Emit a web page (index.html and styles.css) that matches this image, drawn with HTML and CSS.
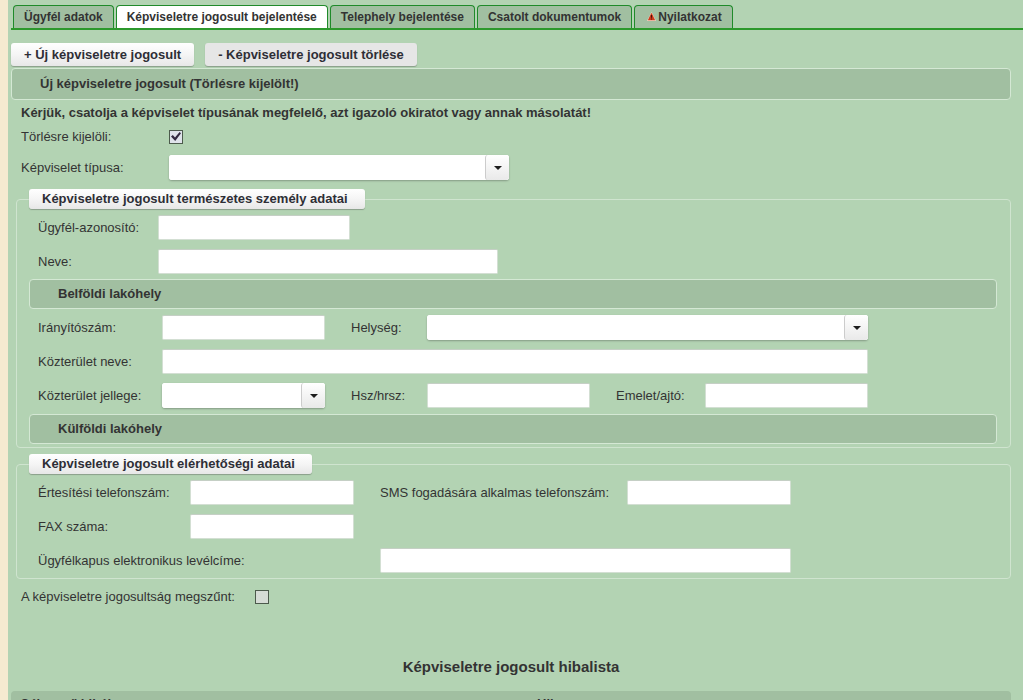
FILE: index.html
```html
<!DOCTYPE html>
<html lang="hu">
<head>
<meta charset="utf-8">
<title>Képviseletre jogosult bejelentése</title>
<link rel="stylesheet" href="styles.css">
</head>
<body>
<div class="page">
  <nav class="tabs">
    <button type="button" class="tab">Ügyfél adatok</button>
    <button type="button" class="tab tab-active" aria-current="page">Képviseletre jogosult bejelentése</button>
    <button type="button" class="tab">Telephely bejelentése</button>
    <button type="button" class="tab">Csatolt dokumentumok</button>
    <button type="button" class="tab"><svg class="warn" viewBox="0 0 9 9" aria-hidden="true"><path d="M4.5 0 9 9H0Z" fill="#f4d9c8"/><path d="M4.5 .8 8.2 8.3H.8Z" fill="#cf3a1c"/><path d="M4.5 3v2.8M4.5 6.6v.9" stroke="#4a1208" stroke-width="1.1"/></svg>Nyilatkozat</button>
  </nav>

  <main class="content">
    <div class="toolbar">
      <button type="button" class="btn">+ Új képviseletre jogosult</button>
      <button type="button" class="btn btn-muted">- Képviseletre jogosult törlése</button>
    </div>
    <h2 class="bar">Új képviseletre jogosult (Törlésre kijelölt!)</h2>

    <form class="form">
      <p class="notice">Kérjük, csatolja a képviselet típusának megfelelő, azt igazoló okiratot vagy annak másolatát!</p>
      <div class="row row-check">
        <label for="torles">Törlésre kijelöli:</label>
        <input class="check" type="checkbox" id="torles" checked>
      </div>
      <div class="row row-type">
        <label for="tipus">Képviselet típusa:</label>
        <span class="combo"><select id="tipus"><option></option></select></span>
      </div>

      <fieldset class="group group-person">
        <legend>Képviseletre jogosult természetes személy adatai</legend>
        <div class="grid grid-person">
          <label for="azon">Ügyfél-azonosító:</label>
          <input class="field field-id" type="text" id="azon">
          <label for="neve">Neve:</label>
          <input class="field" type="text" id="neve">
        </div>
        <h3 class="bar bar-inner">Belföldi lakóhely</h3>
        <div class="grid grid-address">
          <label for="irsz">Irányítószám:</label>
          <input class="field" type="text" id="irsz">
          <label class="mid" for="helyseg">Helység:</label>
          <span class="combo span-3"><select id="helyseg"><option></option></select></span>
          <label for="kozterulet">Közterület neve:</label>
          <input class="field span-5" type="text" id="kozterulet">
          <label for="jelleg">Közterület jellege:</label>
          <span class="combo"><select id="jelleg"><option></option></select></span>
          <label class="mid" for="hsz">Hsz/hrsz:</label>
          <input class="field" type="text" id="hsz">
          <label class="mid" for="emelet">Emelet/ajtó:</label>
          <input class="field" type="text" id="emelet">
        </div>
        <h3 class="bar bar-inner">Külföldi lakóhely</h3>
      </fieldset>

      <fieldset class="group group-contact">
        <legend>Képviseletre jogosult elérhetőségi adatai</legend>
        <div class="grid grid-contact">
          <label for="tel">Értesítési telefonszám:</label>
          <input class="field" type="text" id="tel">
          <label class="mid" for="sms">SMS fogadására alkalmas telefonszám:</label>
          <input class="field" type="text" id="sms">
          <label for="fax">FAX száma:</label>
          <input class="field" type="text" id="fax">
          <label class="start" for="email">Ügyfélkapus elektronikus levélcíme:</label>
          <input class="field field-mail" type="text" id="email">
        </div>
      </fieldset>

      <div class="row row-end">
        <label for="megszunt">A képviseletre jogosultság megszűnt:</label>
        <input class="check" type="checkbox" id="megszunt">
      </div>
    </form>

    <h2 class="errors-title">Képviseletre jogosult hibalista</h2>
    <table class="errors">
      <thead><tr><th>Cél mező hibái</th><th>Hiba</th></tr></thead>
    </table>
  </main>
</div>
</body>
</html>
```
FILE: styles.css
```css
* { box-sizing: border-box; }
html { scrollbar-width: none; }
body {
  margin: 0;
  background: #f5ead0;
  color: #333;
  font: 13px/16px "Liberation Sans", Arial, sans-serif;
}
button, input, select { font: inherit; color: inherit; margin: 0; }
.page {
  margin-left: 8px;
  padding: 5px 0 0 3px;
  min-height: 100vh;
  background: #b3d3b3;
}
.tabs {
  display: flex;
  gap: 2px;
  padding-left: 2px;
  border-bottom: 2px solid #2c982c;
}
.tab {
  height: 23px;
  padding: 0 10px;
  border: 1px solid #1f8a2a;
  border-bottom: 0;
  border-radius: 4px 4px 0 0;
  background: #a1bfa1;
  font-weight: bold;
  font-size: 12px;
  line-height: 20px;
  white-space: nowrap;
}
.tab-active { background: #fff; }
.warn { width: 11px; height: 9px; margin: 0 1px; }
.content { padding-right: 12px; }
.toolbar { display: flex; gap: 11px; padding: 13px 0 2px; }
.btn, .group legend {
  border: 0;
  border-radius: 3px;
  background: linear-gradient(#fff, #f5f5f5 50%, #e7e7e7);
  box-shadow: 0 1px 1px #8a9e8a;
  font-weight: bold;
  color: #2e2e36;
}
.btn { height: 23px; padding: 0 13px; }
.btn-muted { background: #e6e6e6; }
.bar {
  margin: 0;
  padding: 7px 28px;
  border: 1px solid #d4e8d4;
  border-radius: 4px;
  background: #a1bfa1;
  font-size: 13px;
  line-height: 16px;
}
.bar-inner { padding: 6px 28px; }
.notice { margin: 0; padding: 5px 10px 0; font-weight: bold; }
.row { display: flex; align-items: center; padding-left: 10px; }
.row-check { height: 31px; }
.row-type { height: 31px; }
.row-check label, .row-type label { width: 148px; }
.row-type .combo { width: 340px; }
.check {
  appearance: none;
  display: grid;
  place-items: center;
  width: 14px;
  height: 14px;
  border: 1px solid #4c5a4c;
  background: #d6dcd6;
}
.check:checked { background: #dfe3ea; }
.check:checked::before {
  content: "";
  width: 10px;
  height: 10px;
  background: #332a40;
  clip-path: polygon(0 50%, 18% 36%, 40% 60%, 86% 6%, 100% 18%, 42% 96%);
}
.field {
  width: 100%;
  height: 25px;
  padding: 0 4px;
  border: 1px solid #d3dfd3;
  border-top-color: #c5cfc5;
  border-radius: 2px;
  background: #fff;
}
.combo {
  position: relative;
  display: block;
  height: 25px;
  border-radius: 3px;
  background: #fff;
  box-shadow: 0 1px 2px #849a84;
}
.combo select {
  appearance: none;
  width: 100%;
  height: 100%;
  padding: 0 28px 0 4px;
  border: 0;
  border-radius: 3px;
  background: #fff;
}
.combo::before {
  content: "";
  position: absolute;
  top: 0;
  right: 0;
  width: 23px;
  height: 100%;
  border-left: 1px solid #ccc;
  border-radius: 3px;
  background: linear-gradient(#fff, #e9e9e9);
  pointer-events: none;
}
.combo::after {
  content: "";
  position: absolute;
  top: 11px;
  right: 7px;
  border: 4px solid transparent;
  border-top-color: #1d1d1d;
  border-bottom: 0;
  pointer-events: none;
}
.group {
  min-width: 0;
  margin: 6px 0 0 5px;
  padding: 0 13px 3px 12px;
  border: 1px solid #cfe4cf;
  border-radius: 4px;
}
.group legend { padding: 2px 17px 2px 13px; }
.group-contact { padding-bottom: 5px; }
.grid { display: grid; row-gap: 9px; align-items: center; padding-left: 9px; }
.grid-person { grid-template-columns: 120px 340px; padding-top: 6px; padding-bottom: 5px; }
.field-id { width: 192px; }
.grid-address {
  grid-template-columns: 124px 163px 102px 163px 115px 163px;
  padding-top: 6px;
  padding-bottom: 6px;
}
.mid { padding-left: 26px; }
.span-3 { grid-column: span 3; }
.span-5 { grid-column: span 5; }
.grid-contact { grid-template-columns: 152px 164px 273px 164px; padding-top: 6px; }
.start { grid-column: 1 / span 2; white-space: nowrap; }
.field-mail { grid-column: 3 / span 2; justify-self: end; width: 411px; }
.row-end { height: 36px; gap: 20px; }
.errors-title { margin: 0; padding: 42px 0 14px; text-align: center; font-size: 15px; line-height: 20px; }
.errors {
  width: 100%;
  border-spacing: 0;
  background: #a1bfa1;
  border-radius: 4px;
}
.errors th { width: 50%; padding: 5px 9px; text-align: left; }
.errors th + th { padding-left: 26px; }
```
